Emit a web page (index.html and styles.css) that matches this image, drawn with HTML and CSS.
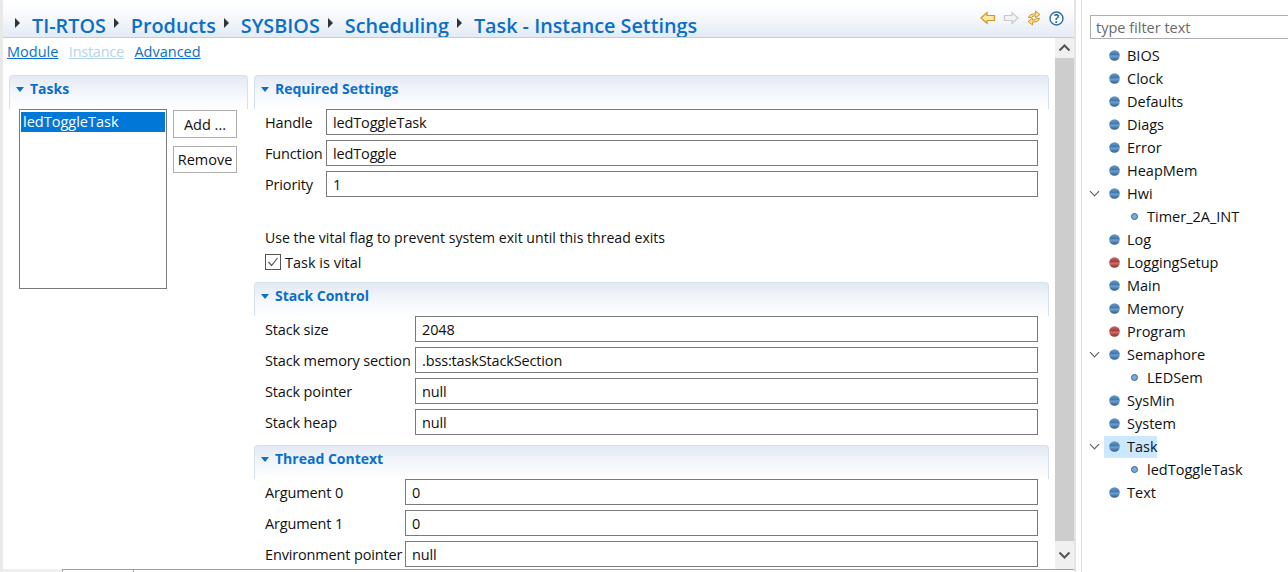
FILE: index.html
```html
<!DOCTYPE html>
<html lang="en">
<head>
<meta charset="utf-8">
<title>Task - Instance Settings</title>
<link rel="stylesheet" href="styles.css">
</head>
<body>
<svg class="defs" width="0" height="0" aria-hidden="true">
  <defs>
    <linearGradient id="blue" x1="0" y1="0" x2="0" y2="1">
      <stop offset="0" stop-color="#6a9ac8"/><stop offset=".42" stop-color="#3f79b0"/>
      <stop offset=".55" stop-color="#6f9fcc"/><stop offset="1" stop-color="#2a5f96"/>
    </linearGradient>
    <linearGradient id="red" x1="0" y1="0" x2="0" y2="1">
      <stop offset="0" stop-color="#c76868"/><stop offset=".42" stop-color="#a83a3a"/>
      <stop offset=".55" stop-color="#cc7070"/><stop offset="1" stop-color="#8f2a2a"/>
    </linearGradient>
    <symbol id="dot" viewBox="0 0 11 11"><circle cx="5.5" cy="5.5" r="5.3" fill="url(#blue)"/></symbol>
    <symbol id="rdot" viewBox="0 0 11 11"><circle cx="5.5" cy="5.5" r="5.3" fill="url(#red)"/></symbol>
    <symbol id="small" viewBox="0 0 7 7"><circle cx="3.5" cy="3.5" r="3" fill="#7fabd2" stroke="#2f659c"/></symbol>
  </defs>
</svg>
<main class="editor">
  <header class="hero">
    <nav class="crumbs">
      <i class="tri"></i><span>TI-RTOS</span><i class="tri"></i><span>Products</span><i class="tri"></i><span>SYSBIOS</span><i class="tri"></i><span>Scheduling</span><i class="tri"></i><span>Task - Instance Settings</span>
    </nav>
    <div class="tools">
      <svg width="16" height="14" viewBox="0 0 16 14"><path d="M1 7 7 1.500V4.500H14.500V9.500H7V12.500Z" fill="#fbe9a8" stroke="#cf9a22" stroke-width="1.200"/></svg>
      <svg width="16" height="14" viewBox="0 0 16 14"><path d="M15 7 9 1.500V4.500H1.500V9.500H9V12.500Z" fill="#f4f4f4" stroke="#c9c9c9" stroke-width="1.200"/></svg>
      <svg width="16" height="16" viewBox="0 0 16 16"><path d="M2.500 7.500C3 5 6 3.800 9.500 3.800V1L14 4.500 9.500 7.800V5.900C7.500 5.900 6 6.300 5.500 7.500Z" fill="#fbe08a" stroke="#c98f1d" stroke-width=".9"/><path d="M13.500 8.500C13 11 10 12.200 6.500 12.200V15L2 11.500 6.500 8.200V10.100C8.500 10.100 10 9.700 10.500 8.500Z" fill="#fbe08a" stroke="#c98f1d" stroke-width=".9"/></svg>
      <svg width="15" height="15" viewBox="0 0 15 15"><circle cx="7.500" cy="7.500" r="6.500" fill="#fff" stroke="#2f6ea5" stroke-width="1.400"/><text x="7.500" y="11.500" class="q">?</text></svg>
    </div>
  </header>
  <div class="workspace">
    <div class="page">
      <div class="links"><a>Module</a><a class="off">Instance</a><a>Advanced</a></div>
      <div class="cols">
        <section class="tasks">
          <h2 class="sec-head"><i class="caret"></i>Tasks</h2>
          <div class="task-body">
            <div class="list"><div class="sel">ledToggleTask</div></div>
            <div class="btns"><button>Add ...</button><button>Remove</button></div>
          </div>
        </section>
        <div class="settings">
          <section class="required">
            <h2 class="sec-head"><i class="caret"></i>Required Settings</h2>
            <div class="rows w61">
              <label class="row"><span>Handle</span><b class="inp">ledToggleTask</b></label>
              <label class="row"><span>Function</span><b class="inp">ledToggle</b></label>
              <label class="row"><span>Priority</span><b class="inp">1</b></label>
            </div>
            <p class="note">Use the vital flag to prevent system exit until this thread exits</p>
            <div class="check"><svg width="16" height="16" viewBox="0 0 16 16"><rect x=".5" y=".5" width="15" height="15" fill="#fff" stroke="#555"/><path d="M3.500 8 6.500 11.500 12.500 4" fill="none" stroke="#555" stroke-width="1.200"/></svg><span>Task is vital</span></div>
          </section>
          <section class="stack">
            <h2 class="sec-head"><i class="caret"></i>Stack Control</h2>
            <div class="rows w150">
              <label class="row"><span>Stack size</span><b class="inp">2048</b></label>
              <label class="row"><span>Stack memory section</span><b class="inp">.bss:taskStackSection</b></label>
              <label class="row"><span>Stack pointer</span><b class="inp">null</b></label>
              <label class="row"><span>Stack heap</span><b class="inp">null</b></label>
            </div>
          </section>
          <section class="thread">
            <h2 class="sec-head"><i class="caret"></i>Thread Context</h2>
            <div class="rows w140">
              <label class="row"><span>Argument 0</span><b class="inp">0</b></label>
              <label class="row"><span>Argument 1</span><b class="inp">0</b></label>
              <label class="row"><span>Environment pointer</span><b class="inp">null</b></label>
            </div>
          </section>
        </div>
      </div>
    </div>
    <div class="scroll">
      <div class="sbtn"><svg width="13" height="8" viewBox="0 0 13 8"><path d="M1.500 6.500 6.500 1.500 11.500 6.500" fill="none" stroke="#555" stroke-width="2"/></svg></div>
      <div class="thumb"></div>
      <div class="sbtn end"><svg width="13" height="8" viewBox="0 0 13 8"><path d="M1.500 1.500 6.500 6.500 11.500 1.500" fill="none" stroke="#555" stroke-width="2"/></svg></div>
    </div>
  </div>
  <div class="tabs"><i class="tab-0"></i><i class="tab-a"></i><i class="tab-b"></i></div>
</main>
<aside class="outline">
  <div class="filter">type filter text</div>
  <ul class="tree">
    <li><svg><use href="#dot"/></svg>BIOS</li>
    <li><svg><use href="#dot"/></svg>Clock</li>
    <li><svg><use href="#dot"/></svg>Defaults</li>
    <li><svg><use href="#dot"/></svg>Diags</li>
    <li><svg><use href="#dot"/></svg>Error</li>
    <li><svg><use href="#dot"/></svg>HeapMem</li>
    <li class="open"><svg><use href="#dot"/></svg>Hwi</li>
    <li class="child"><svg><use href="#small"/></svg>Timer_2A_INT</li>
    <li><svg><use href="#dot"/></svg>Log</li>
    <li><svg><use href="#rdot"/></svg>LoggingSetup</li>
    <li><svg><use href="#dot"/></svg>Main</li>
    <li><svg><use href="#dot"/></svg>Memory</li>
    <li><svg><use href="#rdot"/></svg>Program</li>
    <li class="open"><svg><use href="#dot"/></svg>Semaphore</li>
    <li class="child"><svg><use href="#small"/></svg>LEDSem</li>
    <li><svg><use href="#dot"/></svg>SysMin</li>
    <li><svg><use href="#dot"/></svg>System</li>
    <li class="open picked"><svg><use href="#dot"/></svg>Task</li>
    <li class="child"><svg><use href="#small"/></svg>ledToggleTask</li>
    <li><svg><use href="#dot"/></svg>Text</li>
  </ul>
</aside>
</body>
</html>
```
FILE: styles.css
```css
* { box-sizing: border-box; }
html, body { margin: 0; height: 572px; overflow: hidden; }
body { display: flex; background: #fff; color: #111; font: 14.5px/20px "Open Sans", "Noto Sans", sans-serif; }
.defs { position: absolute; }
.editor { width: 1076px; height: 572px; border-left: 3px solid #e9e9e9; border-right: 2px solid #e4e4e4; display: flex; flex-direction: column; }
.hero { height: 38px; flex: none; padding: 12px 10px 0 7px; display: flex; justify-content: space-between; background: linear-gradient(#fff 0, #fbfcfe 30%, #e4ebf4 100%); border-bottom: 1px solid #b6d0e6; overflow: hidden; }
.crumbs { display: flex; align-items: center; height: 28px; color: #0a6fc9; font: 600 19.8px/28px "Open Sans", sans-serif; }
.crumbs span { margin-right: 8px; }
.tri { width: 0; height: 0; margin: -6px 12px 0 5px; border-left: 5px solid #333; border-top: 5px solid transparent; border-bottom: 5px solid transparent; }
.crumbs span + .tri { margin-left: 0; margin-right: 12px; }
.tools { display: flex; align-items: center; gap: 7px; height: 14px; margin-top: -1px; }
.q { font: 700 11.500px "Open Sans", sans-serif; fill: #2f6ea5; text-anchor: middle; }
.workspace { flex: 1; display: flex; min-height: 0; }
.page { flex: 1; min-width: 0; padding: 4px 0 0 4px; overflow: hidden; }
.links { display: flex; gap: 10.500px; height: 20px; line-height: 20px; }
.links a { color: #0a6fc9; text-decoration: underline; }
.links a.off { color: #b4d4ee; letter-spacing: -.25px; }
.cols { display: flex; gap: 6px; margin-top: 13px; padding-left: 2px; }
.tasks { width: 239px; flex: none; }
.settings { flex: 1; padding-right: 6px; }
.sec-head { margin: 0; height: 34px; padding: 3px 0 0 6px; display: flex; align-items: flex-start; font-size: 14px; line-height: 20px; font-weight: 700; color: #0a6fc9; background: linear-gradient(#e3e9f3 0, #f0f4fa 40%, #fff 100%); border: 1px solid #d4e1ee; border-bottom: 0; border-radius: 4px 4px 0 0; }
.caret { width: 0; height: 0; margin: 8px 6px 0 0; border-top: 5px solid #0a6fc9; border-left: 4.500px solid transparent; border-right: 4.500px solid transparent; }
.task-body { display: flex; padding-left: 10px; }
.list { width: 148px; height: 180px; border: 1px solid #7a7a7a; padding: 2px 1px; }
.sel { background: #0078d7; color: #fff; height: 20px; line-height: 20px; padding-left: 2px; }
.btns { display: flex; flex-direction: column; gap: 8px; margin: 1px 0 0 6px; }
.btns button { width: 64px; height: 27.500px; padding: 2px 0 0; background: #fff; border: 1px solid #adadad; font: inherit; color: #111; }
.rows { display: flex; flex-direction: column; gap: 5px; padding-left: 11px; margin-right: 11px; }
.row { display: flex; height: 26px; align-items: center; }
.row span { flex: none; white-space: nowrap; padding-top: 2px; letter-spacing: -.15px; }
.w61 .row span { width: 61px; }
.w150 .row span { width: 150px; }
.w140 .row span { width: 140px; }
.inp { flex: 1; height: 26px; border: 1px solid #7a7a7a; padding: 1px 0 0 6px; font-weight: 400; line-height: 24px; letter-spacing: -.15px; }
.note { margin: 31px 0 0 11px; height: 20px; font-size: 14.100px; }
.check { display: flex; align-items: center; gap: 4px; margin: 4px 0 0 11px; height: 20px; }
.check span { padding-top: 2px; }
.stack { margin-top: 10px; }
.thread { margin-top: 10px; }
.scroll { width: 19px; flex: none; display: flex; flex-direction: column; background: #f0f0f0; }
.sbtn { height: 20px; display: flex; align-items: center; justify-content: center; }
.sbtn.end { height: 28px; }
.thumb { flex: 1; background: #cdcdcd; }
.tabs { height: 3px; flex: none; display: flex; background: #fff; border-top: 1px solid #a0a0a0; }
.tab-0 { width: 59px; height: 3px; margin-top: -1px; background: #f0f0f0; }
.tab-a { width: 72px; height: 2px; border-left: 1px solid #a0a0a0; border-right: 1px solid #a0a0a0; }
.outline { flex: 1; min-width: 0; padding: 15px 0 0 8px; border-left: 1px solid #dcdcec; margin-left: 5px; }
.filter { height: 24px; border: 1px solid #adadad; border-right: 0; padding-left: 5px; line-height: 23px; color: #6a6a6a; }
.tree { list-style: none; margin: 6px 0 0 0; padding: 0; }
.tree li { position: relative; height: 23px; line-height: 22px; padding-left: 37px; }
.tree li svg { position: absolute; left: 19px; top: 5px; width: 11px; height: 11px; }
.tree li.child { padding-left: 57px; }
.tree li.child svg { left: 41px; top: 7px; width: 7px; height: 7px; }
.tree li.open::before { content: ""; position: absolute; left: 1px; top: 5px; width: 6px; height: 6px; border-right: 1.500px solid #555; border-bottom: 1.500px solid #555; transform: rotate(45deg); }
.tree li.picked::after { content: ""; position: absolute; z-index: -1; left: 14px; top: 0; width: 53px; height: 22px; background: #cce8ff; }
```
